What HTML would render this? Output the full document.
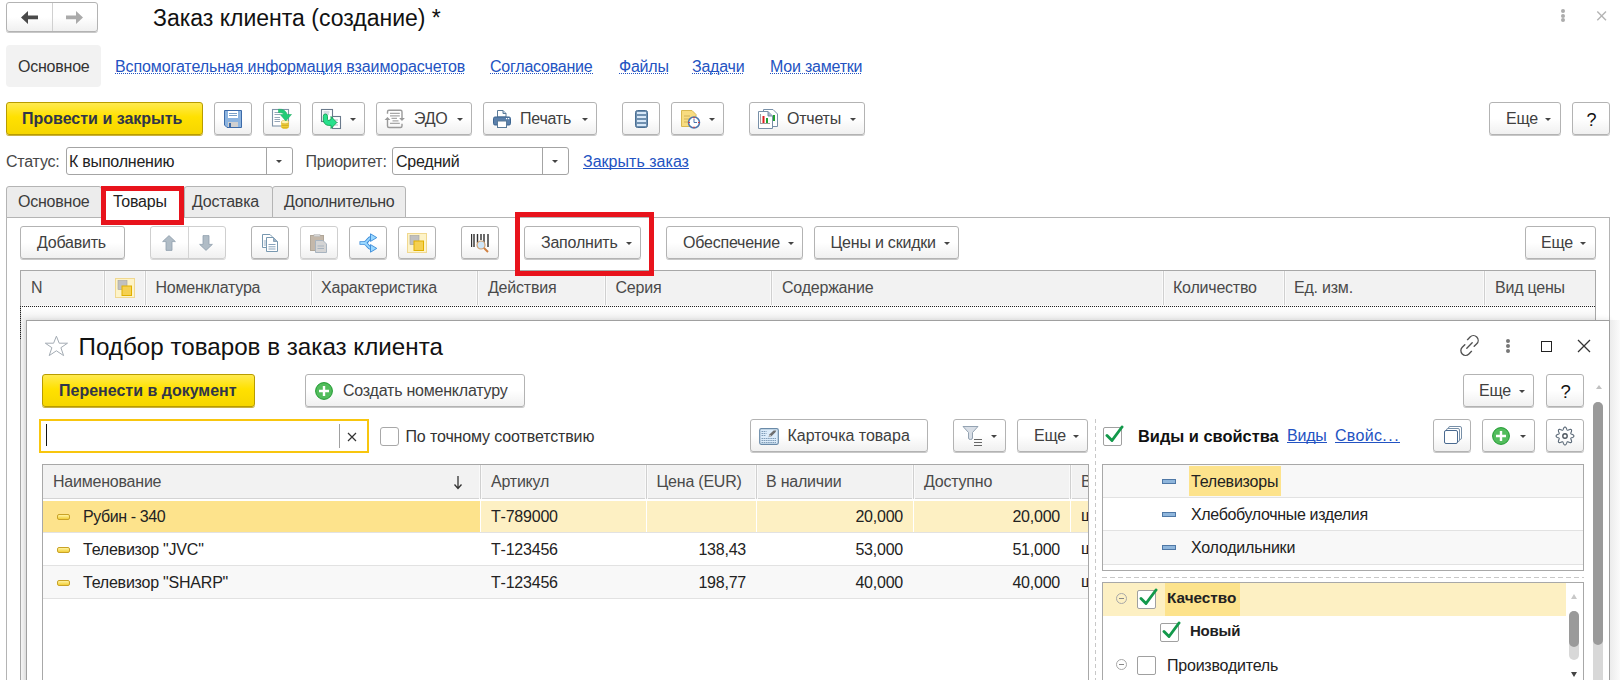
<!DOCTYPE html>
<html><head><meta charset="utf-8">
<style>
*{box-sizing:border-box;margin:0;padding:0}
html,body{width:1620px;height:680px;overflow:hidden;background:#fff}
body{position:relative;font-family:"Liberation Sans",sans-serif;font-size:16px;letter-spacing:-0.22px;color:#333}
.a{position:absolute}
.t{position:absolute;white-space:nowrap;line-height:20px;height:20px}
.btn{position:absolute;border:1px solid #b3b3b3;border-radius:3px;background:linear-gradient(#fff 0%,#fff 50%,#f0f0f0 100%);box-shadow:0 1px 0 #c8c8c8}
.ybtn{position:absolute;border:1px solid #b89c00;border-radius:3px;background:linear-gradient(#ffea50 0%,#ffe100 45%,#f6d600 100%);box-shadow:0 1px 0 #c8b040}
.dd{position:absolute;width:0;height:0;border-left:3px solid transparent;border-right:3px solid transparent;border-top:3px solid #444}
.lnk{color:#2353c2}.lnk::after{content:"";position:absolute;left:0;right:0;top:16px;height:1px;background:repeating-linear-gradient(90deg,#2353c2 0 1px,transparent 1px 2px)}
.lnks{color:#2353c2}.lnks::after{content:"";position:absolute;left:0;right:0;top:16px;height:1px;background:#2353c2}
.red{position:absolute;border:4px solid #e8131c}
.vl{position:absolute;width:1px;background:#d0d0d0;box-shadow:-1px 0 0 #fafafa,1px 0 0 #fafafa}
.hl{position:absolute;height:1px;background:#e2e2e2}
</style></head><body>

<!-- nav buttons -->
<div class="btn" style="left:6px;top:2px;width:92px;height:30px"></div>
<div class="a" style="left:52px;top:3px;width:1px;height:28px;background:#d0d0d0"></div>
<svg class="a" style="left:20px;top:10px" width="20" height="14" viewBox="0 0 20 14"><path d="M1 7.4 L8 1 L8 5.5 L18 5.5 L18 9.2 L8 9.2 L8 14 Z" fill="#4a4a4a"/></svg>
<svg class="a" style="left:64px;top:10px" width="20" height="15" viewBox="0 0 20 15"><path d="M19 7.4 L12 1 L12 5.5 L2 5.5 L2 9.2 L12 9.2 L12 14 Z" fill="#aaaaaa"/></svg>

<div class="t" style="left:153px;top:5px;font-size:23px;letter-spacing:0;line-height:26px;height:26px;color:#111">Заказ клиента (создание) *</div>

<!-- top right dots, close -->
<div class="a" style="left:1561px;top:8.6px;width:4px;height:4px;border-radius:2px;background:#acacac"></div>
<div class="a" style="left:1561px;top:13.5px;width:4px;height:4px;border-radius:2px;background:#acacac"></div>
<div class="a" style="left:1561px;top:18.4px;width:4px;height:4px;border-radius:2px;background:#acacac"></div>
<svg class="a" style="left:1596px;top:10px" width="12" height="12" viewBox="0 0 12 12"><path d="M1.3 1.5 L10 10.3 M10 1.5 L1.3 10.3" stroke="#b4b4b4" stroke-width="1.4"/></svg>

<!-- menu row -->
<div class="a" style="left:6px;top:45px;width:95px;height:42px;background:#f2f2f2;border-radius:4px"></div>
<div class="t" style="left:18px;top:57px">Основное</div>
<div class="t lnk" style="left:115px;top:57px;letter-spacing:-0.1px">Вспомогательная информация взаиморасчетов</div>
<div class="t lnk" style="left:490px;top:57px">Согласование</div>
<div class="t lnk" style="left:619px;top:57px">Файлы</div>
<div class="t lnk" style="left:692px;top:57px">Задачи</div>
<div class="t lnk" style="left:770px;top:57px">Мои заметки</div>

<!-- MAIN TOOLBAR -->

<div class="ybtn" style="left:6px;top:102px;width:197px;height:33px"></div>
<div class="t" style="left:22px;top:109px;font-weight:bold;color:#30354a;letter-spacing:0">Провести и закрыть</div>

<div class="btn" style="left:214px;top:102px;width:38px;height:33px"></div>
<svg class="a" style="left:224px;top:110px" width="18" height="18" viewBox="0 0 18 18"><path d="M0.5 0.5 H17.5 V17.5 H3 L0.5 15 Z" fill="#8cb4e0" stroke="#3c6aa8"/><rect x="4" y="1" width="10" height="7" fill="#fff"/><path d="M5 3.5 H13 M5 5.5 H13" stroke="#7aa0c8"/><rect x="4" y="12" width="10" height="5" fill="#d0d0d0"/><rect x="5" y="13" width="2" height="4" fill="#3c6aa8"/></svg>

<div class="btn" style="left:263px;top:102px;width:38px;height:33px"></div>
<svg class="a" style="left:271px;top:108px" width="22" height="22" viewBox="0 0 22 22"><rect x="1.5" y="1.5" width="16" height="16.5" fill="#fff" stroke="#8094a8" stroke-width="1.1"/><path d="M3.5 4.5 H9 M3.5 6.5 H9 M3.5 9.5 H9 M3.5 11.5 H9 M3.5 13.5 H9" stroke="#8a9cb0" stroke-width="0.9"/><ellipse cx="14" cy="19" rx="3.8" ry="1.8" fill="#e0b820"/><rect x="10.2" y="14" width="7.6" height="5" fill="#f0d040"/><path d="M10.5 15.8 H17.5 M10.5 17.6 H17.5" stroke="#c8a010" stroke-width="0.7"/><ellipse cx="14" cy="14" rx="3.8" ry="1.7" fill="#fff4b0" stroke="#d8b030" stroke-width="0.5"/><path d="M7.5 1.2 Q14.5 0.8 16.3 6.5 L20.5 6.5 L14.8 13 L9.2 6.5 L13 6.5 Q12 4.5 7.5 4.5 Z" fill="#22cc77" stroke="#14a85a" stroke-width="0.5" stroke-linejoin="round"/></svg>

<div class="btn" style="left:312px;top:102px;width:53px;height:33px"></div>
<svg class="a" style="left:320px;top:108px" width="22" height="22" viewBox="0 0 22 22"><rect x="1.5" y="1.5" width="11" height="12" fill="#fff" stroke="#6a7a8c" stroke-width="1.1"/><path d="M3.5 4 H9.5 M3.5 6 H9" stroke="#9aaabb" stroke-width="0.8"/><rect x="12.5" y="8.5" width="8" height="12" fill="#fff" stroke="#6a7a8c" stroke-width="1.1"/><path d="M14.5 12 H18 M14.5 14.5 H18 M14.5 17 H18" stroke="#9aaabb" stroke-width="0.8"/><path d="M3.3 8.3 Q3.3 6 5.4 6 Q7.5 6 7.5 8.3 V11.5 Q7.5 13 9 12.3 L11 11.5 L11 8.5 L16.8 14.5 L11 20.5 L11 17.3 Q5 18.3 3.3 13 Z" fill="#26e08c" stroke="#14a050" stroke-width="0.9" stroke-linejoin="round"/></svg>
<div class="dd" style="left:350px;top:118px"></div>

<div class="btn" style="left:376px;top:102px;width:96px;height:33px"></div>
<svg class="a" style="left:384px;top:108px" width="22" height="22" viewBox="0 0 22 22"><path d="M3.5 5.8 V3.8 Q3.5 2.3 5 2.3 H16.5 Q18 2.3 18 3.8 V10 M18 15.8 V18 Q18 19.5 16.5 19.5 H5 Q3.5 19.5 3.5 18 V11.5" fill="none" stroke="#9a9a9a" stroke-width="1.4"/><path d="M0.6 12 H6.4 L3.5 9 Z M15.1 10 H20.9 L18 13 Z" fill="#9a9a9a"/><path d="M6 5.3 H15.8 M6 7.8 H15.8 M7.5 10.3 H13 M8.5 12.8 H14.5 M6 15.3 H15.8" stroke="#a8a8a8" stroke-width="1.3"/></svg>
<div class="t" style="left:414px;top:109px;color:#404040">ЭДО</div>
<div class="dd" style="left:457px;top:118px"></div>

<div class="btn" style="left:483px;top:102px;width:114px;height:33px"></div>
<svg class="a" style="left:493px;top:110px" width="18" height="18" viewBox="0 0 18 18"><path d="M4.5 0.5 H10 L13 3.5 V7 H4.5 Z" fill="#fff" stroke="#5a7a98"/><path d="M10 0.5 V3.5 H13" fill="#bcd" stroke="#5a7a98"/><rect x="0.5" y="7" width="17" height="8" rx="1.5" fill="#5b80ab" stroke="#3d6590"/><rect x="4.5" y="11" width="9" height="6.5" fill="#fff" stroke="#5a7a98"/><rect x="13" y="8" width="1.2" height="1.2" fill="#fff"/><rect x="15" y="8" width="1.2" height="1.2" fill="#fff"/></svg>
<div class="t" style="left:520px;top:109px;color:#404040">Печать</div>
<div class="dd" style="left:582px;top:118px"></div>

<div class="btn" style="left:622px;top:102px;width:38px;height:33px"></div>
<svg class="a" style="left:635px;top:110px" width="13" height="18" viewBox="0 0 13 18"><rect x="0.5" y="0.5" width="12" height="17" rx="2" fill="#6f90b0" stroke="#4a6f94"/><rect x="2" y="2" width="9" height="2" fill="#d8e8f8"/><rect x="2" y="6" width="9" height="2" fill="#d8e8f8"/><rect x="2" y="10" width="9" height="2" fill="#d8e8f8"/><rect x="2" y="14" width="9" height="2" fill="#d8e8f8"/></svg>

<div class="btn" style="left:671px;top:102px;width:53px;height:33px"></div>
<svg class="a" style="left:681px;top:110px" width="20" height="19" viewBox="0 0 20 19"><path d="M0.5 0.5 H11 L15 4.5 V16.5 H0.5 Z" fill="#f8dc80" stroke="#d8b850"/><path d="M3 6 H9 M3 9 H8 M3 12 H7" stroke="#c8a850" stroke-width="0.8"/><circle cx="13" cy="12.5" r="5.5" fill="#fff" stroke="#4a78b0" stroke-width="1.5"/><path d="M13 9 V12.5 H16" stroke="#4a78b0" stroke-width="1" fill="none"/><circle cx="13" cy="7.7" r="0.8" fill="#e03030"/><circle cx="17.8" cy="12.5" r="0.8" fill="#e03030"/><circle cx="13" cy="17.3" r="0.8" fill="#e03030"/><circle cx="8.2" cy="12.5" r="0.8" fill="#e03030"/></svg>
<div class="dd" style="left:709px;top:118px"></div>

<div class="btn" style="left:749px;top:102px;width:116px;height:33px"></div>
<svg class="a" style="left:758px;top:109px" width="21" height="21" viewBox="0 0 21 21"><path d="M5.5 0.5 H15 L19.5 5 V17.5 H5.5 Z" fill="#fff" stroke="#7890a8"/><path d="M0.5 2.5 H10 L14.5 7 V19.5 H0.5 Z" fill="#fff" stroke="#7890a8"/><path d="M10 2.5 V7 H14.5" fill="#a8b8c8" stroke="#7890a8"/><rect x="2" y="5" width="1" height="10" fill="#a0a0a0"/><rect x="2" y="14" width="10" height="1" fill="#a0a0a0"/><rect x="4.5" y="7" width="2" height="7" fill="#e02020"/><rect x="8" y="9" width="2" height="5" fill="#20a030"/><rect x="15" y="6" width="2" height="6" fill="#20a030"/></svg>
<div class="t" style="left:787px;top:109px;color:#404040">Отчеты</div>
<div class="dd" style="left:850px;top:118px"></div>

<div class="btn" style="left:1489px;top:102px;width:72px;height:33px"></div>
<div class="t" style="left:1506px;top:109px;color:#404040">Еще</div>
<div class="dd" style="left:1545px;top:118px"></div>
<div class="btn" style="left:1572px;top:102px;width:38px;height:33px"></div>
<div class="t" style="left:1586.5px;top:109.5px;color:#111;font-size:18px;letter-spacing:0">?</div>

<!-- status row -->
<div class="t" style="left:6px;top:152px;color:#474747">Статус:</div>
<div class="a" style="left:66px;top:147px;width:227px;height:28px;border:1px solid #a4a4a4;border-radius:3px;background:#fff"></div>
<div class="a" style="left:266px;top:148px;width:1px;height:26px;background:#a4a4a4"></div>
<div class="dd" style="left:276px;top:160px"></div>
<div class="t" style="left:69px;top:152px;color:#222">К выполнению</div>
<div class="t" style="left:305.5px;top:152px;color:#474747">Приоритет:</div>
<div class="a" style="left:392px;top:147px;width:177px;height:28px;border:1px solid #a4a4a4;border-radius:3px;background:#fff"></div>
<div class="a" style="left:542px;top:148px;width:1px;height:26px;background:#a4a4a4"></div>
<div class="dd" style="left:552px;top:160px"></div>
<div class="t" style="left:396px;top:152px;color:#222">Средний</div>
<div class="t lnks" style="left:583px;top:152px;letter-spacing:0.02px">Закрыть заказ</div>


<!-- tabs -->
<div class="a" style="left:6px;top:217px;width:1604px;height:463px;border:1px solid #b4b4b4;border-bottom:none;background:#fff"></div>
<div class="a" style="left:6px;top:186px;width:96px;height:32px;border:1px solid #b4b4b4;border-radius:3px 3px 0 0;background:#ececec"></div>
<div class="a" style="left:101px;top:186px;width:84px;height:32px;border:1px solid #b4b4b4;border-bottom:none;border-radius:3px 3px 0 0;background:#fff"></div>
<div class="a" style="left:184px;top:186px;width:89px;height:32px;border:1px solid #b4b4b4;border-radius:3px 3px 0 0;background:#ececec"></div>
<div class="a" style="left:272px;top:186px;width:134px;height:32px;border:1px solid #b4b4b4;border-radius:3px 3px 0 0;background:#ececec"></div>
<div class="t" style="left:18px;top:192px;color:#3c3c3c">Основное</div>
<div class="t" style="left:113px;top:192px;color:#222">Товары</div>
<div class="t" style="left:192px;top:192px;color:#3c3c3c">Доставка</div>
<div class="t" style="left:284px;top:192px;letter-spacing:-0.38px;color:#3c3c3c">Дополнительно</div>

<!-- inner toolbar -->
<div class="btn" style="left:20px;top:226px;width:105px;height:33px"></div>
<div class="t" style="left:37px;top:233px;color:#404040">Добавить</div>

<div class="btn" style="left:150px;top:226px;width:76px;height:33px;border-color:#cfcfcf;box-shadow:0 1px 0 #d8d8d8"></div>
<div class="a" style="left:188px;top:227px;width:1px;height:31px;background:#d4d4d4"></div>
<svg class="a" style="left:162px;top:235px" width="14" height="16" viewBox="0 0 14 16"><path d="M7 0.6 L13.4 6.6 H10 V15.4 H4 V6.6 H0.6 Z" fill="#b0bcc6" stroke="#90a0ad" stroke-width="0.8" stroke-linejoin="round"/></svg>
<svg class="a" style="left:199px;top:235px" width="14" height="16" viewBox="0 0 14 16"><path d="M7 15.4 L13.4 9.4 H10 V0.6 H4 V9.4 H0.6 Z" fill="#b0bcc6" stroke="#90a0ad" stroke-width="0.8" stroke-linejoin="round"/></svg>

<div class="btn" style="left:251px;top:226px;width:38px;height:33px"></div>
<svg class="a" style="left:262px;top:234px" width="17" height="18" viewBox="0 0 17 18"><path d="M0.5 0.5 H8 L10 2.5 V13.5 H0.5 Z" fill="#fff" stroke="#7898b0"/><path d="M1.8 7 H4 M1.8 9 H4 M1.8 11 H4" stroke="#8aa4bc" stroke-width="0.9"/><path d="M4.5 3.5 H11.5 L15.5 7.5 V17.5 H4.5 Z" fill="#fff" stroke="#7898b0"/><path d="M11.5 3.5 V7.5 H15.5" fill="#9ab0c4" stroke="#7898b0" stroke-width="0.8"/><path d="M6.5 10.5 H13.5 M6.5 12.8 H13.5 M6.5 15 H13.5" stroke="#7a98b4" stroke-width="0.9"/></svg>

<div class="btn" style="left:300px;top:226px;width:38px;height:33px;border-color:#cfcfcf;box-shadow:0 1px 0 #d8d8d8"></div>
<svg class="a" style="left:310px;top:234px" width="17" height="19" viewBox="0 0 17 19"><rect x="0.5" y="1.5" width="13" height="15" fill="#c4b8aa" stroke="#b0a698"/><rect x="4" y="0.5" width="6" height="2" fill="#d8d8d8" stroke="#b8b8b8" stroke-width="0.5"/><path d="M5.5 6.5 H13 L16.5 10 V18.5 H5.5 Z" fill="#d4d4d4" stroke="#a8b4c0"/><path d="M7.5 12 H14 M7.5 14.5 H14" stroke="#a8b4c0"/></svg>

<div class="btn" style="left:349px;top:226px;width:38px;height:33px"></div>
<svg class="a" style="left:359px;top:233px" width="19" height="20" viewBox="0 0 19 20"><g fill="none" stroke-linecap="butt" stroke-linejoin="round"><path d="M0.5 10 H4.5 Q7 10 9 7 Q10.5 4.8 12.5 4.6 M4.5 10 Q7 10 9 13 Q10.5 15.2 12.5 15.4" stroke="#3a8ad8" stroke-width="3.6"/><path d="M1.3 10 H4.5 Q7 10 9 7 Q10.5 4.8 12.8 4.6 M4.5 10 Q7 10 9 13 Q10.5 15.2 12.8 15.4" stroke="#9ad8ff" stroke-width="1.8"/></g><path d="M11.5 0.8 L17.8 4.6 L11.5 8.4 Z M11.5 11.6 L17.8 15.4 L11.5 19.2 Z" fill="#9ad8ff" stroke="#3a8ad8" stroke-width="0.9" stroke-linejoin="round"/></svg>

<div class="btn" style="left:398px;top:226px;width:38px;height:33px"></div>
<svg class="a" style="left:407px;top:233px" width="20" height="20" viewBox="0 0 20 20"><rect x="0.5" y="0.5" width="19" height="19" fill="#fdf3c8" stroke="#f0d890"/><rect x="3" y="2.5" width="9" height="9" fill="#c0c0c0" stroke="#a0a0a0" stroke-width="0.6"/><rect x="7" y="8" width="9.5" height="9.5" fill="#f5d050" stroke="#e0b000"/></svg>

<div class="btn" style="left:461px;top:226px;width:38px;height:33px"></div>
<svg class="a" style="left:471px;top:234px" width="19" height="19" viewBox="0 0 19 19"><path d="M0.5 0 V13 M3 0 V13 M6.5 0 V9 M10 0 V6 M13 0 V9 M17 0 V13" stroke="#303030" stroke-width="1.4"/><circle cx="10" cy="11" r="4" fill="#cfe6f8" stroke="#d0a070" stroke-width="1.2"/><path d="M13 14 L17 18" stroke="#d08040" stroke-width="2"/></svg>

<div class="btn" style="left:524px;top:226px;width:117px;height:33px"></div>
<div class="t" style="left:541px;top:233px;color:#404040">Заполнить</div>
<div class="dd" style="left:626px;top:242px"></div>

<div class="btn" style="left:666px;top:226px;width:137px;height:33px"></div>
<div class="t" style="left:683px;top:233px;color:#404040">Обеспечение</div>
<div class="dd" style="left:788px;top:242px"></div>

<div class="btn" style="left:814px;top:226px;width:145px;height:33px"></div>
<div class="t" style="left:830.5px;top:233px;color:#404040">Цены и скидки</div>
<div class="dd" style="left:944px;top:242px"></div>

<div class="btn" style="left:1525px;top:226px;width:71px;height:33px"></div>
<div class="t" style="left:1541px;top:233px;color:#404040">Еще</div>
<div class="dd" style="left:1580px;top:242px"></div>

<!-- table header -->
<div class="a" style="left:20px;top:270px;width:1576px;height:37px;border:1px solid #a8a8a8;border-bottom:none;background:#f2f2f2"></div>
<div class="vl" style="left:104px;top:271px;height:35px"></div>
<div class="vl" style="left:145px;top:271px;height:35px"></div>
<div class="vl" style="left:311px;top:271px;height:35px"></div>
<div class="vl" style="left:477px;top:271px;height:35px"></div>
<div class="vl" style="left:605px;top:271px;height:35px"></div>
<div class="vl" style="left:771px;top:271px;height:35px"></div>
<div class="vl" style="left:1163px;top:271px;height:35px"></div>
<div class="vl" style="left:1284px;top:271px;height:35px"></div>
<div class="vl" style="left:1484px;top:271px;height:35px"></div>
<div class="t" style="left:31px;top:278px;color:#4a4a4a">N</div>
<svg class="a" style="left:115px;top:278px" width="20" height="20" viewBox="0 0 20 20"><rect x="0.5" y="0.5" width="19" height="19" fill="#fdf3c8" stroke="#f0d890"/><rect x="3" y="2.5" width="9" height="9" fill="#c0c0c0" stroke="#a0a0a0" stroke-width="0.6"/><rect x="7" y="8" width="9.5" height="9.5" fill="#f5d050" stroke="#e0b000"/></svg>
<div class="t" style="left:155.5px;top:278px;color:#4a4a4a">Номенклатура</div>
<div class="t" style="left:321px;top:278px;color:#4a4a4a">Характеристика</div>
<div class="t" style="left:488px;top:278px;color:#4a4a4a">Действия</div>
<div class="t" style="left:615.5px;top:278px;color:#4a4a4a">Серия</div>
<div class="t" style="left:782px;top:278px;color:#4a4a4a">Содержание</div>
<div class="t" style="left:1173px;top:278px;color:#4a4a4a">Количество</div>
<div class="t" style="left:1294px;top:278px;color:#4a4a4a">Ед. изм.</div>
<div class="t" style="left:1495px;top:278px;color:#4a4a4a">Вид цены</div>
<div class="a" style="left:21px;top:305px;width:1574px;height:1px;background:#fafafa"></div><div class="a" style="left:20px;top:306px;width:1576px;height:1px;background:repeating-linear-gradient(90deg,#222 0 1px,transparent 1px 2px)"></div>
<div class="a" style="left:20px;top:306px;width:1px;height:374px;background:#a8a8a8"></div><div class="a" style="left:21px;top:307px;width:5px;height:373px;background:linear-gradient(90deg,#f6f6f6,#ececec)"></div><div class="a" style="left:20px;top:306px;width:1px;height:34px;background:repeating-linear-gradient(180deg,#222 0 1px,transparent 1px 2px)"></div>
<div class="a" style="left:1595px;top:306px;width:1px;height:14px;background:#a8a8a8"></div>
<div class="a" style="left:21px;top:307px;width:1574px;height:13px;background:linear-gradient(#fff,#f0f0f0)"></div>

<!-- red boxes -->
<div class="red" style="left:101px;top:186px;width:83px;height:39px;border-width:5px"></div>
<div class="red" style="left:515px;top:212px;width:139px;height:64px;border-width:5px"></div>


<!-- MODAL -->
<div class="a" style="left:26px;top:320px;width:1584px;height:380px;border:1px solid #a0a0a0;background:#fff;box-shadow:0 0 6px rgba(0,0,0,0.12)"></div>
<svg class="a" style="left:44px;top:335px" width="25" height="22" viewBox="0 0 25 22"><path d="M12.4 1.2 L15.2 8.2 L23.5 8.2 L16.9 12.7 L19.6 20.6 L12.4 15.8 L5.2 20.6 L7.9 12.7 L1.3 8.2 L9.6 8.2 Z" fill="none" stroke="#a4acb4" stroke-width="1"/></svg>
<div class="t" style="left:78.5px;top:334px;font-size:24.2px;letter-spacing:0;line-height:26px;height:26px;color:#111">Подбор товаров в заказ клиента</div>
<svg class="a" style="left:1459px;top:335px" width="21" height="21" viewBox="0 0 21 21"><g transform="translate(10.5 10.5) scale(1.17) translate(-10.5 -10.5)"><path d="M8.8 5.5 L11 3.3 A4 4 0 0 1 16.7 9 L14.5 11.2 M12.2 15.5 L10 17.7 A4 4 0 0 1 4.3 12 L6.5 9.8 M8.2 12.8 L12.8 8.2" fill="none" stroke="#505050" stroke-width="1.15" stroke-linecap="round"/></g></svg>
<div class="a" style="left:1506px;top:339px;width:4px;height:4px;border-radius:2px;background:#777"></div>
<div class="a" style="left:1506px;top:344px;width:4px;height:4px;border-radius:2px;background:#777"></div>
<div class="a" style="left:1506px;top:349px;width:4px;height:4px;border-radius:2px;background:#777"></div>
<div class="a" style="left:1541px;top:341px;width:11px;height:11px;border:1.3px solid #222"></div>
<svg class="a" style="left:1577px;top:339px" width="14" height="14" viewBox="0 0 14 14"><path d="M1 1 L13 13 M13 1 L1 13" stroke="#333" stroke-width="1.3"/></svg>

<!-- modal toolbar 1 -->
<div class="ybtn" style="left:42px;top:374px;width:213px;height:33px"></div>
<div class="t" style="left:59px;top:381px;letter-spacing:0;font-weight:bold;color:#30354a">Перенести в документ</div>
<div class="btn" style="left:305px;top:374px;width:220px;height:33px"></div>
<svg class="a" style="left:315px;top:382px" width="18" height="18" viewBox="0 0 18 18"><circle cx="9" cy="9" r="8.4" fill="#52bc5c" stroke="#1f9a30" stroke-width="1"/><path d="M9 4 V14 M4 9 H14" stroke="#fff" stroke-width="2.4"/></svg>
<div class="t" style="left:343px;top:381px;color:#404040">Создать номенклатуру</div>
<div class="btn" style="left:1463px;top:374px;width:71px;height:33px"></div>
<div class="t" style="left:1479px;top:381px;color:#404040">Еще</div>
<div class="dd" style="left:1519px;top:390px"></div>
<div class="btn" style="left:1546px;top:374px;width:38px;height:33px"></div>
<div class="t" style="left:1560.5px;top:382px;color:#111;font-size:18.5px;letter-spacing:0">?</div>

<!-- modal toolbar 2 -->
<div class="a" style="left:39px;top:419px;width:330px;height:34px;border:2px solid #f8c60e;background:#fff"></div>
<div class="a" style="left:339px;top:424px;width:1px;height:24px;background:#a0a0a0"></div>
<div class="a" style="left:46px;top:424px;width:1px;height:22px;background:#111"></div>
<svg class="a" style="left:347px;top:432px" width="10" height="10" viewBox="0 0 10 10"><path d="M1 1 L9 9 M9 1 L1 9" stroke="#333" stroke-width="1.2"/></svg>
<div class="a" style="left:380px;top:427px;width:19px;height:19px;border:1px solid #a8a8a8;border-radius:3px;background:#fff"></div>
<div class="t" style="left:405.5px;top:427px;letter-spacing:-0.13px">По точному соответствию</div>

<div class="btn" style="left:750px;top:419px;width:178px;height:33px"></div>
<svg class="a" style="left:759px;top:428px" width="20" height="17" viewBox="0 0 20 17"><rect x="0.7" y="0.7" width="18.6" height="15.6" rx="1.5" fill="#dcecfa" stroke="#6a8aa8" stroke-width="1.2"/><path d="M2.5 3.5 H7.5 M2.5 5.5 H7.5 M2.5 7.5 H7 M2.5 10.5 H17 M2.5 12.5 H17 M2.5 14.5 H17" stroke="#6a8aa8" stroke-width="0.8" stroke-dasharray="1.6 0.6"/><path d="M9.5 9.3 L10.6 6.3 L14.6 2.4 L17.4 2.4 L16.2 4.6 L12.4 8.3 Z" fill="#6e6e6e"/><path d="M10 8.8 L10.9 6.9 L12.2 8.1 Z" fill="#fff"/></svg>
<div class="t" style="left:787.5px;top:426px;letter-spacing:-0.02px;color:#404040">Карточка товара</div>
<div class="btn" style="left:953px;top:419px;width:53px;height:33px"></div>
<svg class="a" style="left:962px;top:425px" width="22" height="22" viewBox="0 0 22 22"><path d="M1 1.5 H16 L10.5 7.5 V13 Q10.5 14.5 8.5 14.5 Q6.5 14.5 6.5 13 V7.5 Z" fill="#d8dee6" stroke="#8a9aaa" stroke-width="0.9" stroke-linejoin="round"/><path d="M12 14.5 H20 M12 17.5 H20 M12 20.5 H20" stroke="#666" stroke-width="1"/></svg>
<div class="dd" style="left:991px;top:435px"></div>
<div class="btn" style="left:1017px;top:419px;width:71px;height:33px"></div>
<div class="t" style="left:1034px;top:426px;color:#404040">Еще</div>
<div class="dd" style="left:1073px;top:435px"></div>

<div class="a" style="left:1095px;top:419px;width:1px;height:261px;background:repeating-linear-gradient(180deg,#c8c8c8 0 4px,transparent 4px 7px)"></div>

<!-- right header -->
<div class="a" style="left:1103px;top:427px;width:19px;height:19px;border:1px solid #a0a0a0;border-radius:2px;background:#fff"></div>
<svg class="a" style="left:1104px;top:424px" width="20" height="20" viewBox="0 0 20 20"><path d="M3 11.5 L8 16.5 L18 3" fill="none" stroke="#13994b" stroke-width="2.9" stroke-linecap="round" stroke-linejoin="round"/></svg>
<div class="t" style="left:1138px;top:426px;font-weight:bold;color:#111;font-size:16.4px;letter-spacing:0">Виды и свойства</div>
<div class="t lnks" style="left:1287px;top:426px">Виды</div>
<div class="t lnks" style="left:1335px;top:426px;letter-spacing:0.3px">Свойс<span style="letter-spacing:1.6px">...</span></div>

<div class="btn" style="left:1433px;top:419px;width:38px;height:33px"></div>
<svg class="a" style="left:1443px;top:425px" width="20" height="20" viewBox="0 0 20 20"><rect x="5.5" y="1.5" width="13" height="13" rx="1.5" fill="#fff" stroke="#7890a8"/><rect x="3.5" y="3.5" width="13" height="13" rx="1.5" fill="#fff" stroke="#7890a8"/><rect x="1.5" y="5.5" width="13" height="13" rx="1.5" fill="#fff" stroke="#4a6a90"/></svg>
<div class="btn" style="left:1482px;top:419px;width:53px;height:33px"></div>
<svg class="a" style="left:1492px;top:427px" width="18" height="18" viewBox="0 0 18 18"><circle cx="9" cy="9" r="8.4" fill="#52bc5c" stroke="#1f9a30" stroke-width="1"/><path d="M9 4 V14 M4 9 H14" stroke="#fff" stroke-width="2.4"/></svg>
<div class="dd" style="left:1520px;top:435px"></div>
<div class="btn" style="left:1546px;top:419px;width:38px;height:33px"></div>
<svg class="a" style="left:1555px;top:426px" width="20" height="20" viewBox="0 0 20 20"><path d="M10.00 1.05 L10.35 1.12 L10.68 1.33 L10.99 1.66 L11.25 2.08 L11.48 2.55 L11.68 3.02 L11.85 3.45 L12.01 3.81 L12.19 4.07 L12.39 4.23 L12.64 4.26 L12.95 4.20 L13.33 4.06 L13.75 3.88 L14.22 3.68 L14.71 3.51 L15.20 3.41 L15.65 3.39 L16.03 3.48 L16.33 3.67 L16.52 3.97 L16.61 4.35 L16.59 4.80 L16.49 5.29 L16.32 5.78 L16.12 6.25 L15.94 6.67 L15.80 7.05 L15.74 7.36 L15.77 7.61 L15.93 7.81 L16.19 7.99 L16.55 8.15 L16.98 8.32 L17.45 8.52 L17.92 8.75 L18.34 9.01 L18.67 9.32 L18.88 9.65 L18.95 10.00 L18.88 10.35 L18.67 10.68 L18.34 10.99 L17.92 11.25 L17.45 11.48 L16.98 11.68 L16.55 11.85 L16.19 12.01 L15.93 12.19 L15.77 12.39 L15.74 12.64 L15.80 12.95 L15.94 13.33 L16.12 13.75 L16.32 14.22 L16.49 14.71 L16.59 15.20 L16.61 15.65 L16.52 16.03 L16.33 16.33 L16.03 16.52 L15.65 16.61 L15.20 16.59 L14.71 16.49 L14.22 16.32 L13.75 16.12 L13.33 15.94 L12.95 15.80 L12.64 15.74 L12.39 15.77 L12.19 15.93 L12.01 16.19 L11.85 16.55 L11.68 16.98 L11.48 17.45 L11.25 17.92 L10.99 18.34 L10.68 18.67 L10.35 18.88 L10.00 18.95 L9.65 18.88 L9.32 18.67 L9.01 18.34 L8.75 17.92 L8.52 17.45 L8.32 16.98 L8.15 16.55 L7.99 16.19 L7.81 15.93 L7.61 15.77 L7.36 15.74 L7.05 15.80 L6.67 15.94 L6.25 16.12 L5.78 16.32 L5.29 16.49 L4.80 16.59 L4.35 16.61 L3.97 16.52 L3.67 16.33 L3.48 16.03 L3.39 15.65 L3.41 15.20 L3.51 14.71 L3.68 14.22 L3.88 13.75 L4.06 13.33 L4.20 12.95 L4.26 12.64 L4.23 12.39 L4.07 12.19 L3.81 12.01 L3.45 11.85 L3.02 11.68 L2.55 11.48 L2.08 11.25 L1.66 10.99 L1.33 10.68 L1.12 10.35 L1.05 10.00 L1.12 9.65 L1.33 9.32 L1.66 9.01 L2.08 8.75 L2.55 8.52 L3.02 8.32 L3.45 8.15 L3.81 7.99 L4.07 7.81 L4.23 7.61 L4.26 7.36 L4.20 7.05 L4.06 6.67 L3.88 6.25 L3.68 5.78 L3.51 5.29 L3.41 4.80 L3.39 4.35 L3.48 3.97 L3.67 3.67 L3.97 3.48 L4.35 3.39 L4.80 3.41 L5.29 3.51 L5.78 3.68 L6.25 3.88 L6.67 4.06 L7.05 4.20 L7.36 4.26 L7.61 4.23 L7.81 4.07 L7.99 3.81 L8.15 3.45 L8.32 3.02 L8.52 2.55 L8.75 2.08 L9.01 1.66 L9.32 1.33 L9.65 1.12 Z" fill="none" stroke="#5e6c7a" stroke-width="1.1"/><circle cx="10" cy="10" r="2.2" fill="none" stroke="#505860" stroke-width="1.4"/></svg>

<!-- outer scrollbar -->
<div class="a" style="left:1596px;top:385px;width:0;height:0;border-left:3px solid transparent;border-right:3px solid transparent;border-bottom:4px solid #c0c0c0"></div>
<div class="a" style="left:1593px;top:402px;width:10px;height:278px;border-radius:5px 5px 0 0;background:#d8d8d8"></div>
<div class="a" style="left:1593px;top:402px;width:10px;height:243px;border-radius:5px;background:#9a9a9a"></div>
<div class="a" style="left:1610px;top:320px;width:10px;height:360px;background:linear-gradient(90deg,#ececec,#fbfbfb)"></div>


<!-- LEFT TABLE -->
<div class="a" style="left:42px;top:464px;width:1047px;height:216px;border:1px solid #a8a8a8;border-bottom:none;background:#fff"></div>
<div class="a" style="left:43px;top:465px;width:1045px;height:34px;background:#f2f2f2;border-bottom:1px solid #d4d4d4"></div>
<div class="vl" style="left:480px;top:465px;height:34px"></div>
<div class="vl" style="left:646px;top:465px;height:34px"></div>
<div class="vl" style="left:756px;top:465px;height:34px"></div>
<div class="vl" style="left:913px;top:465px;height:34px"></div>
<div class="vl" style="left:1070px;top:465px;height:34px"></div>
<div class="t" style="left:53px;top:472px;color:#4a4a4a">Наименование</div>
<svg class="a" style="left:453px;top:475px" width="10" height="15" viewBox="0 0 10 15"><path d="M5 1 V13 M1.5 9.5 L5 13.5 L8.5 9.5" fill="none" stroke="#333" stroke-width="1.3"/></svg>
<div class="t" style="left:491px;top:472px;color:#4a4a4a">Артикул</div>
<div class="t" style="left:656.5px;top:472px;color:#4a4a4a">Цена (EUR)</div>
<div class="t" style="left:766px;top:472px;color:#4a4a4a">В наличии</div>
<div class="t" style="left:924px;top:472px;color:#4a4a4a">Доступно</div>
<div class="a" style="left:1071px;top:465px;width:17px;height:34px;overflow:hidden"><div class="t" style="left:10px;top:7px;color:#4a4a4a">Вид</div></div>

<!-- row 1 -->
<div class="a" style="left:43px;top:501px;width:1045px;height:31px;background:#fdf0c3"></div>
<div class="a" style="left:43px;top:501px;width:437px;height:31px;background:#fde38c"></div>
<div class="a" style="left:480px;top:500px;width:1px;height:32px;background:#fff"></div>
<div class="a" style="left:646px;top:500px;width:1px;height:32px;background:#fff"></div>
<div class="a" style="left:756px;top:500px;width:1px;height:32px;background:#fff"></div>
<div class="a" style="left:913px;top:500px;width:1px;height:32px;background:#fff"></div>
<div class="a" style="left:1070px;top:500px;width:1px;height:32px;background:#fff"></div>
<div class="hl" style="left:43px;top:532px;width:1045px"></div>
<!-- row 3 bg -->
<div class="a" style="left:43px;top:566px;width:1045px;height:32px;background:#f8f8f8"></div>
<div class="hl" style="left:43px;top:565px;width:1045px"></div>
<div class="hl" style="left:43px;top:598px;width:1045px"></div>
<div class="a" style="left:57px;top:514px;width:13px;height:6px;border:1px solid #c9a226;border-radius:2px;background:linear-gradient(#fff3a0,#f2cf3a)"></div><div class="a" style="left:57px;top:547px;width:13px;height:6px;border:1px solid #c9a226;border-radius:2px;background:linear-gradient(#fff3a0,#f2cf3a)"></div><div class="a" style="left:57px;top:580px;width:13px;height:6px;border:1px solid #c9a226;border-radius:2px;background:linear-gradient(#fff3a0,#f2cf3a)"></div>
<div class="t" style="left:83px;top:507px;color:#222;letter-spacing:-0.4px">Рубин - 340</div>
<div class="t" style="left:491px;top:507px;color:#222">Т-789000</div>
<div class="t" style="left:491px;top:540px;color:#222">Т-123456</div>
<div class="t" style="left:491px;top:573px;color:#222">Т-123456</div>
<div class="t" style="left:83px;top:540px;color:#222">Телевизор "JVC"</div>
<div class="t" style="left:83px;top:573px;color:#222">Телевизор "SHARP"</div>
<div class="t r" style="right:874px;top:540px;color:#222">138,43</div>
<div class="t r" style="right:874px;top:573px;color:#222">198,77</div>
<div class="t r" style="right:717px;top:507px;color:#222">20,000</div>
<div class="t r" style="right:717px;top:540px;color:#222">53,000</div>
<div class="t r" style="right:717px;top:573px;color:#222">40,000</div>
<div class="t r" style="right:560px;top:507px;color:#222">20,000</div>
<div class="t r" style="right:560px;top:540px;color:#222">51,000</div>
<div class="t r" style="right:560px;top:573px;color:#222">40,000</div>
<div class="a" style="left:1071px;top:500px;width:17px;height:100px;overflow:hidden"><div class="t" style="left:10px;top:6px;color:#222">шт</div><div class="t" style="left:10px;top:39px;color:#222">шт</div><div class="t" style="left:10px;top:72px;color:#222">шт</div></div>

<!-- RIGHT UPPER TABLE -->
<div class="a" style="left:1102px;top:464px;width:482px;height:107px;border:1px solid #a8a8a8;background:#fff"></div>
<div class="a" style="left:1103px;top:465px;width:480px;height:32px;background:#f8f8f8"></div>
<div class="hl" style="left:1103px;top:497px;width:480px"></div>
<div class="a" style="left:1103px;top:531px;width:480px;height:33px;background:#f8f8f8"></div>
<div class="hl" style="left:1103px;top:530px;width:480px"></div>
<div class="hl" style="left:1103px;top:564px;width:480px"></div>
<div class="a" style="left:1189px;top:466px;width:92px;height:30px;background:#fde38c"></div>
<div class="a" style="left:1162px;top:479px;width:14px;height:5px;border:1px solid #4f78a6;background:#8fb6dc"></div><div class="a" style="left:1162px;top:512px;width:14px;height:5px;border:1px solid #4f78a6;background:#8fb6dc"></div><div class="a" style="left:1162px;top:545px;width:14px;height:5px;border:1px solid #4f78a6;background:#8fb6dc"></div>
<div class="t" style="left:1191px;top:472px;color:#222">Телевизоры</div>
<div class="t" style="left:1191px;top:505px;color:#222;letter-spacing:-0.34px">Хлебобулочные изделия</div>
<div class="t" style="left:1191px;top:538px;color:#222">Холодильники</div>

<div class="a" style="left:1102px;top:577px;width:482px;height:1px;background:repeating-linear-gradient(90deg,#c8c8c8 0 5px,transparent 5px 8px)"></div>

<!-- TREE -->
<div class="a" style="left:1102px;top:582px;width:482px;height:98px;border:1px solid #a8a8a8;border-bottom:none;background:#fff"></div>
<div class="a" style="left:1103px;top:583px;width:463px;height:33px;background:#fdf0c3"></div>
<div class="a" style="left:1165px;top:583px;width:75px;height:33px;background:#fde38c"></div>
<div class="a" style="left:1116px;top:593px;width:11px;height:11px;border:1px solid #a8a8a8;border-radius:50%"></div>
<div class="a" style="left:1119px;top:598px;width:5px;height:1px;background:#888"></div>
<div class="a" style="left:1137px;top:590px;width:19px;height:19px;border:1px solid #a0a0a0;border-radius:2px;background:#fff"></div>
<svg class="a" style="left:1138px;top:587px" width="20" height="20" viewBox="0 0 20 20"><path d="M3 11.5 L8 16.5 L18 3" fill="none" stroke="#13994b" stroke-width="2.9" stroke-linecap="round" stroke-linejoin="round"/></svg>
<div class="t" style="left:1167px;top:588px;color:#222;font-weight:bold;font-size:15.3px;letter-spacing:0">Качество</div>

<div class="a" style="left:1160px;top:623px;width:19px;height:19px;border:1px solid #a0a0a0;border-radius:2px;background:#fff"></div>
<svg class="a" style="left:1161px;top:620px" width="20" height="20" viewBox="0 0 20 20"><path d="M3 11.5 L8 16.5 L18 3" fill="none" stroke="#13994b" stroke-width="2.9" stroke-linecap="round" stroke-linejoin="round"/></svg>
<div class="t" style="left:1190px;top:621px;color:#222;font-weight:bold;font-size:15px">Новый</div>

<div class="a" style="left:1116px;top:659px;width:11px;height:11px;border:1px solid #a8a8a8;border-radius:50%"></div>
<div class="a" style="left:1119px;top:664px;width:5px;height:1px;background:#888"></div>
<div class="a" style="left:1137px;top:656px;width:19px;height:19px;border:1px solid #a0a0a0;border-radius:2px;background:#fff"></div>
<div class="t" style="left:1167px;top:656px;color:#222">Производитель</div>

<!-- inner scrollbar -->
<div class="a" style="left:1571px;top:594px;width:0;height:0;border-left:3px solid transparent;border-right:3px solid transparent;border-bottom:5px solid #c8c8c8"></div>
<div class="a" style="left:1569px;top:611px;width:10px;height:49px;border-radius:5px;background:#d8d8d8"></div>
<div class="a" style="left:1569px;top:611px;width:10px;height:36px;border-radius:5px;background:#9a9a9a"></div>
<div class="a" style="left:1571px;top:672px;width:0;height:0;border-left:3px solid transparent;border-right:3px solid transparent;border-top:5px solid #444"></div>



</body></html>
